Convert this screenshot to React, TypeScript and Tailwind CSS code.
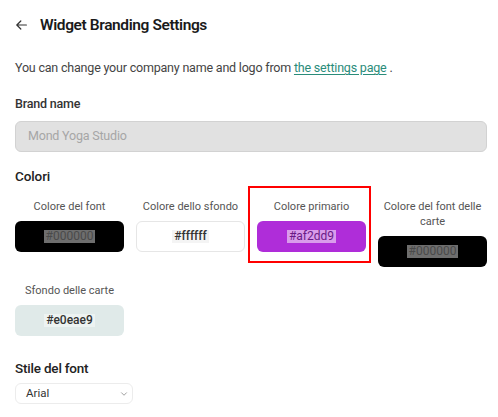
import { ChevronDown } from 'lucide-react'

interface Swatch {
  label: string
  hex: string
  swatchClass: string
  codeClass: string
  highlighted?: boolean
}

const swatches: Swatch[] = [
  { label: 'Colore del font', hex: '#000000', swatchClass: 'bg-black', codeClass: 'bg-[#6e6e6e] text-[#4a4a4a]' },
  { label: 'Colore dello sfondo', hex: '#ffffff', swatchClass: 'bg-white border border-[#e6e6e6]', codeClass: 'bg-[#f4f4f4] text-[#333333] font-medium' },
  { label: 'Colore primario', hex: '#af2dd9', swatchClass: 'bg-[#af2dd9]', codeClass: 'bg-[#d99ceb] text-[#6a1a86]', highlighted: true },
  { label: 'Colore del font delle carte', hex: '#000000', swatchClass: 'bg-black', codeClass: 'bg-[#6e6e6e] text-[#4a4a4a]' },
  { label: 'Sfondo delle carte', hex: '#e0eae9', swatchClass: 'bg-[#e0eae9]', codeClass: 'bg-[#edf3f2] text-[#333333] font-medium' },
]

function ColorItem({ item }: { item: Swatch }) {
  return (
    <div className="relative flex flex-col">
      {item.highlighted && (
        <div className="pointer-events-none absolute -left-[9px] -right-[5px] -top-[13px] -bottom-[11px] border-2 border-[#ff0000]" />
      )}
      <span className="text-center text-[11px] leading-[15px] text-[#555555]">
        {item.label}
      </span>
      <div className={`mt-[7px] flex h-[31px] items-center justify-center rounded-[6px] ${item.swatchClass}`}>
        <code className={`px-[2px] text-[12px] leading-[13px] font-['Roboto',sans-serif] ${item.codeClass}`}>
          {item.hex}
        </code>
      </div>
    </div>
  )
}

export default function App() {
  return (
    <div className="min-h-screen bg-white pl-[15px] pr-[11px] pt-[13px] font-['Roboto',sans-serif] text-[#222222]">
      <div className="flex items-center gap-[13px] pl-[1px]">
        <svg width="11" height="10" viewBox="0 0 11 10" fill="none" stroke="#333333" strokeWidth="1.2" strokeLinecap="round" strokeLinejoin="round">
          <path d="M10.4 5H0.8M4.8 1L0.8 5L4.8 9" />
        </svg>
        <h1 className="text-[15.5px] font-semibold leading-[24px] tracking-[-0.4px] text-[#1a1a1a]">Widget Branding Settings</h1>
      </div>

      <p className="mt-[21px] text-[12.5px] leading-[20px] tracking-[-0.2px] text-[#444444]">
        You can change your company name and logo from{' '}
        <a href="#" className="text-[#2a8c7a] underline underline-offset-2">the settings page</a> .
      </p>

      <div className="mt-[16px]">
        <label className="block text-[12.5px] font-medium leading-[20px] tracking-[-0.2px] text-[#333333]">Brand name</label>
        <div className="mt-[7px] flex h-[31px] items-center rounded-[6px] border border-[#d2d2d2] bg-[#e1e1e1] px-[12px] text-[12.5px] tracking-[-0.2px] text-[#a6a6a6]">
          Mond Yoga Studio
        </div>
      </div>

      <div className="mt-[14px]">
        <h2 className="text-[13.5px] font-medium leading-[20px] tracking-[-0.1px] text-[#222222]">Colori</h2>
        <div className="mt-[13px] grid grid-cols-4 items-start gap-x-[12px] gap-y-[16px]">
          {swatches.map((s) => (
            <ColorItem key={s.label} item={s} />
          ))}
        </div>
      </div>

      <div className="mt-[22px]">
        <h2 className="text-[13.5px] font-medium leading-[20px] tracking-[-0.2px] text-[#222222]">Stile del font</h2>
        <div className="mt-[5px] flex h-[21px] w-[118px] items-center justify-between rounded-[6px] border border-[#ececec] bg-white pl-[10px] pr-[3px] text-[11.5px] text-[#333333]">
          <span>Arial</span>
          <ChevronDown size={10} strokeWidth={1.5} className="text-[#666666]" />
        </div>
      </div>
    </div>
  )
}
